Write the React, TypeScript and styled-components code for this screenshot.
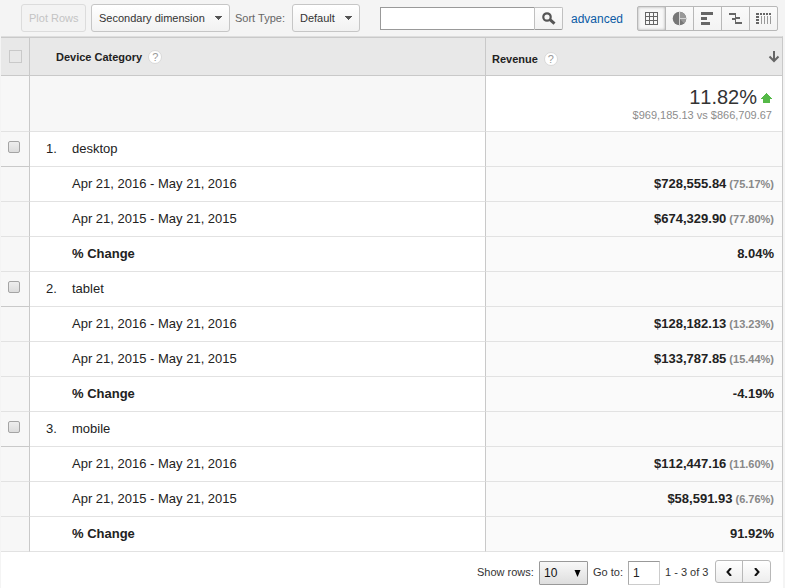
import React from 'react';
import styled, { createGlobalStyle } from 'styled-components';

const GlobalStyle = createGlobalStyle`
  * { box-sizing: border-box; }
  body {
    margin: 0;
    background: #f4f4f4;
    font-family: "Liberation Sans", Arial, sans-serif;
    font-size: 13px;
    color: #222;
    overflow: hidden;
  }
`;

const Page = styled.div`
  width: 785px;
  height: 588px;
  display: flex;
  flex-direction: column;
  padding: 0 2px 0 1px;
`;

const Toolbar = styled.div`
  height: 36px;
  flex: none;
  display: flex;
  align-items: flex-start;
  padding: 4px 0 0 20px;
  font-size: 11px;
`;

const ToolButton = styled.button<{ $width: number; $gap?: number; $muted?: boolean }>`
  width: ${p => p.$width}px;
  height: 28px;
  margin: 0 ${p => p.$gap ?? 0}px 0 0;
  padding: 0 7px;
  flex: none;
  display: flex;
  align-items: center;
  justify-content: space-between;
  border: 1px solid ${p => (p.$muted ? '#dcdcdc' : '#c6c6c6')};
  border-radius: 3px;
  background: ${p => (p.$muted ? '#f3f3f3' : 'linear-gradient(#fff, #f1f1f1)')};
  color: ${p => (p.$muted ? '#c4c4c4' : '#333')};
  font: 11px "Liberation Sans", Arial, sans-serif;
  white-space: nowrap;
`;

const ToolLabel = styled.span`
  width: 57px;
  flex: none;
  line-height: 28px;
  color: #666;
  white-space: nowrap;
`;

const Search = styled.div`
  display: flex;
  width: 183px;
  height: 23px;
  margin: 3px 8px 0 20px;
  flex: none;
`;

const SearchInput = styled.input`
  width: 154px;
  height: 23px;
  padding: 0 4px;
  border: 1px solid #999;
  border-right: 0;
  border-radius: 0;
  background: #fff;
  outline: 0;
`;

const SearchButton = styled.button`
  width: 29px;
  height: 23px;
  padding: 0;
  display: flex;
  align-items: center;
  justify-content: center;
  border: 1px solid #c0c0c0;
  border-bottom-color: #999;
  border-radius: 0 2px 2px 0;
  background: linear-gradient(#fcfcfc, #f2f2f2);
`;

const Advanced = styled.a`
  width: 66px;
  flex: none;
  font-size: 12px;
  line-height: 30px;
  color: #0b5aa5;
`;

const ViewGroup = styled.div`
  display: flex;
  width: 141px;
  height: 25px;
  margin-top: 2px;
  flex: none;
  border: 1px solid #b8b8b8;
  border-radius: 2px;
  background: linear-gradient(#fafafa, #f3f3f3);
`;

const ViewButton = styled.button<{ $active?: boolean }>`
  width: 28px;
  height: 23px;
  padding: 0;
  flex: none;
  border: 0;
  border-right: 1px solid #b8b8b8;
  background: ${p => (p.$active ? '#f8f8f8' : 'transparent')};
  box-shadow: ${p => (p.$active ? 'inset 0 0 3px #aaa' : 'none')};
  &:last-child { border-right: 0; width: 27px; }
  svg { display: block; }
`;

const Table = styled.div`
  width: 782px;
  flex: none;
  border-top: 1px solid #dedede;
  border-right: 1px solid #c9c9c9;
`;

const Row = styled.div<{ $height?: number }>`
  display: grid;
  grid-template-columns: 29px 456px 1fr;
  height: ${p => p.$height ?? 35}px;
`;

const Cell = styled.div<{ $bg?: string; $line?: string; $divider?: boolean }>`
  display: flex;
  align-items: center;
  min-width: 0;
  background: ${p => p.$bg ?? '#fff'};
  border-bottom: 1px solid ${p => p.$line ?? '#e2e2e2'};
  border-right: ${p => (p.$divider ? '1px solid #c9c9c9' : '0')};
`;

const HeaderRow = styled(Row)`
  height: 39px;
  border-top: 1px solid #c9c9c9;
  font-size: 11px;
  font-weight: bold;
`;

const HeaderCell = styled(Cell)<{ $left: number; $top?: number }>`
  background: #e8e8e8;
  border-bottom-color: #c9c9c9;
  padding: ${p => p.$top ?? 0}px 2px 0 ${p => p.$left}px;
`;

const Help = styled.span`
  width: 14px;
  height: 14px;
  margin-left: 6px;
  border: 1px solid #d9d9d9;
  border-radius: 50%;
  background: #fff;
  color: #999;
  font-size: 11px;
  font-weight: normal;
  line-height: 12px;
  text-align: center;
`;

const SortArrow = styled.svg`
  margin: -4px 0 0 auto;
`;

const HeaderBox = styled.span`
  width: 13px;
  height: 13px;
  border: 1px solid #c9c9c9;
`;

const RowBox = styled.span`
  width: 12px;
  height: 12px;
  margin: -4px 0 0 7px;
  border: 1px solid #a4a4a4;
  border-radius: 2px;
  background: linear-gradient(#eee, #dcdcdc);
`;

const NameCell = styled(Cell)<{ $bold?: boolean }>`
  padding: 0 0 2px 16px;
  font-weight: ${p => (p.$bold ? 'bold' : 'normal')};
`;

const Index = styled.span`
  width: 26px;
`;

const ValueCell = styled(Cell)`
  justify-content: flex-end;
  padding: 0 8px 2px 0;
  font-weight: bold;
  font-kerning: none;
`;

const Share = styled.span`
  margin-left: 3px;
  padding-top: 1px;
  font-size: 11px;
  color: #888;
`;

const Summary = styled(Cell)`
  flex-direction: column;
  align-items: flex-end;
  justify-content: flex-start;
  padding: 10px 10px 0 0;
  font-size: 11px;
  color: #8c8c8c;
`;

const Total = styled.div`
  display: flex;
  align-items: center;
  height: 23px;
  padding-bottom: 1px;
  gap: 4px;
  font-size: 20px;
  font-kerning: none;
  color: #333;
  svg { margin-top: 2px; }
`;

const Footer = styled.div`
  width: 782px;
  flex: 1;
  display: flex;
  align-items: flex-start;
  padding: 8px 0 0 476px;
  background: #fff;
  font-size: 11px;
  color: #333;
`;

const FooterText = styled.span<{ $width: number }>`
  width: ${p => p.$width}px;
  flex: none;
  line-height: 25px;
  white-space: nowrap;
`;

const RowsSelect = styled.div`
  width: 49px;
  height: 24px;
  margin: 1px 5px 0 0;
  padding: 0 6px 0 4px;
  flex: none;
  display: flex;
  align-items: center;
  justify-content: space-between;
  border: 1px solid #999;
  border-radius: 1px;
  background: linear-gradient(#f8f8f8, #dedede);
  font-size: 12px;
  color: #111;
`;

const PageInput = styled.input`
  width: 32px;
  height: 24px;
  margin: 1px 5px 0 0;
  padding: 0 4px;
  flex: none;
  border: 1px solid #ccc;
  border-top-color: #999;
  border-left-color: #aaa;
  border-radius: 0;
  background: #fff;
  font: 12px "Liberation Sans", Arial, sans-serif;
  color: #222;
  outline: 0;
`;

const Pager = styled.div`
  width: 56px;
  height: 23px;
  flex: none;
  display: flex;
  border: 1px solid #b8b8b8;
  border-radius: 3px;
  background: linear-gradient(#fff, #ededed);
`;

const PagerButton = styled.button`
  width: 26px;
  height: 21px;
  padding: 0;
  display: flex;
  align-items: center;
  justify-content: center;
  border: 0;
  background: transparent;
  & + & { width: 28px; border-left: 1px solid #b8b8b8; }
`;

const Caret = () => (
  <svg width="7" height="4" viewBox="0 0 7 4" shapeRendering="crispEdges">
    <path d="M0 0h7v1h-1v1h-1v1h-1v1h-1v-1h-1v-1h-1v-1h-1z" fill="#555" />
  </svg>
);

const views = [
  <path key="grid" d="M7.5 5.5h12v12h-12zM11.5 5.5v12M15.5 5.5v12M7.5 9.5h12M7.5 13.5h12" fill="none" stroke="#666" shapeRendering="crispEdges" />,
  <g key="pie">
    <circle cx="13.5" cy="11.5" r="6.8" fill="#777" />
    <path d="M14 11.5V4.800a6.700 6.700 0 0 1 6.200 6.700zM14 12h6.200a6.700 6.700 0 0 1-2.100 4.600z" fill="#999" />
    <path d="M13.500 5v13M13.500 11.500h6.500" fill="none" stroke="#d4d4d4" />
  </g>,
  <path key="bars" d="M7 5h12v3H7zM7 10h6v3H7zM7 15h9v3H7z" fill="#666" shapeRendering="crispEdges" />,
  <path key="compare" d="M7 6h7v1H7zM7 7h7v1H7zM13 8h1v7h-1zM10 11h3v1h-3zM10 12h3v1h-3zM14 10h4v2h-4zM13 15h7v2h-7z" fill="#666" shapeRendering="crispEdges" />,
  <g key="pivot" fill="#666" shapeRendering="crispEdges">
    <path d="M6 6h3v2H6zM10 6h2v2h-2zM13 6h2v2h-2zM16 6h2v2h-2zM19 6h2v2h-2zM6 9h3v2H6zM6 12h3v2H6zM6 15h3v2H6z" />
    <path d="M11 9h1v8h-1zM14 9h1v8h-1zM17 9h1v8h-1zM20 9h1v8h-1z" fill="#999" />
  </g>,
];

const devices = [
  { name: 'desktop', now: '$728,555.84', nowShare: '75.17%', before: '$674,329.90', beforeShare: '77.80%', change: '8.04%' },
  { name: 'tablet', now: '$128,182.13', nowShare: '13.23%', before: '$133,787.85', beforeShare: '15.44%', change: '-4.19%' },
  { name: 'mobile', now: '$112,447.16', nowShare: '11.60%', before: '$58,591.93', beforeShare: '6.76%', change: '91.92%' },
];

type DataRowProps = { label: string; value: string; share?: string; bold?: boolean };

const DataRow = ({ label, value, share, bold }: DataRowProps) => (
  <Row>
    <Cell $bg="#f7f7f7" $divider />
    <NameCell $divider $bold={bold}><Index />{label}</NameCell>
    <ValueCell $bg="#fafafa">{value}{share && <Share>({share})</Share>}</ValueCell>
  </Row>
);

export default function App() {
  return (
    <Page>
      <GlobalStyle />
      <Toolbar>
        <ToolButton $width={65} $gap={5} $muted>Plot Rows</ToolButton>
        <ToolButton $width={139} $gap={5}>Secondary dimension<Caret /></ToolButton>
        <ToolLabel>Sort Type:</ToolLabel>
        <ToolButton $width={68}>Default<Caret /></ToolButton>
        <Search>
          <SearchInput aria-label="Search" />
          <SearchButton aria-label="Search">
            <svg width="14" height="13" viewBox="0 0 14 13" fill="none" stroke="#555">
              <circle cx="5" cy="5" r="3.700" strokeWidth="2.2" />
              <path d="M8 7.700l4.500 4" strokeWidth="3" />
            </svg>
          </SearchButton>
        </Search>
        <Advanced>advanced</Advanced>
        <ViewGroup>
          {views.map((icon, i) => (
            <ViewButton key={i} $active={i === 0}>
              <svg width="27" height="23" viewBox="0 0 27 23">{icon}</svg>
            </ViewButton>
          ))}
        </ViewGroup>
      </Toolbar>

      <Table>
        <HeaderRow>
          <HeaderCell $left={8} $divider><HeaderBox /></HeaderCell>
          <HeaderCell $left={26} $divider>Device Category<Help>?</Help></HeaderCell>
          <HeaderCell $left={6} $top={4}>
            Revenue<Help>?</Help>
            <SortArrow width="12" height="12" viewBox="0 0 12 12">
              <path d="M6 0v10M1.500 5.500L6 10l4.500-4.500" fill="none" stroke="#666" strokeWidth="2" />
            </SortArrow>
          </HeaderCell>
        </HeaderRow>
        <Row $height={56}>
          <Cell $bg="#f7f7f7" $divider />
          <Cell $bg="#f7f7f7" $divider />
          <Summary>
            <Total>
              11.82%
              <svg width="11" height="10" viewBox="0 0 11 10" shapeRendering="crispEdges">
                <path d="M5 0h1v1h1v1h1v1h1v1h1v1h1v1H9v4H2V6H0V5h1V4h1V3h1V2h1V1h1z" fill="#55b948" />
              </svg>
            </Total>
            <span>$969,185.13 vs $866,709.67</span>
          </Summary>
        </Row>
        {devices.map((d, i) => (
          <React.Fragment key={d.name}>
            <Row>
              <Cell $bg="#f7f7f7" $line="#c9c9c9" $divider><RowBox /></Cell>
              <NameCell $divider><Index>{i + 1}.</Index>{d.name}</NameCell>
              <ValueCell $bg="#fafafa" />
            </Row>
            <DataRow label="Apr 21, 2016 - May 21, 2016" value={d.now} share={d.nowShare} />
            <DataRow label="Apr 21, 2015 - May 21, 2015" value={d.before} share={d.beforeShare} />
            <DataRow label="% Change" value={d.change} bold />
          </React.Fragment>
        ))}
      </Table>

      <Footer>
        <FooterText $width={62}>Show rows:</FooterText>
        <RowsSelect>
          10
          <svg width="7" height="7" viewBox="0 0 7 7"><path d="M0.500 0h6L3.500 7z" fill="#000" /></svg>
        </RowsSelect>
        <FooterText $width={35}>Go to:</FooterText>
        <PageInput defaultValue="1" aria-label="Go to page" />
        <FooterText $width={50}>1 - 3 of 3</FooterText>
        <Pager>
          <PagerButton aria-label="Previous">
            <svg width="6" height="8" viewBox="0 0 6 8"><path d="M5 0L1.500 4L5 8" fill="none" stroke="#111" strokeWidth="2" /></svg>
          </PagerButton>
          <PagerButton aria-label="Next">
            <svg width="6" height="8" viewBox="0 0 6 8"><path d="M1 0L4.500 4L1 8" fill="none" stroke="#111" strokeWidth="2" /></svg>
          </PagerButton>
        </Pager>
      </Footer>
    </Page>
  );
}
